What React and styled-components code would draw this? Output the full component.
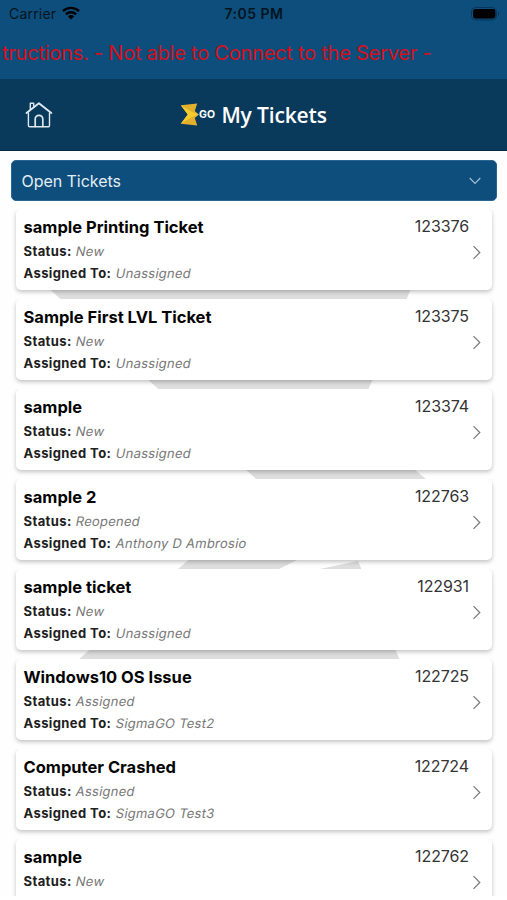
import styled, { createGlobalStyle } from 'styled-components';

const tickets = [
    { id: '123376', title: 'sample Printing Ticket', status: 'New', assignedTo: 'Unassigned' },
    { id: '123375', title: 'Sample First LVL Ticket', status: 'New', assignedTo: 'Unassigned' },
    { id: '123374', title: 'sample', status: 'New', assignedTo: 'Unassigned' },
    { id: '122763', title: 'sample 2', status: 'Reopened', assignedTo: 'Anthony D Ambrosio' },
    { id: '122931', title: 'sample ticket', status: 'New', assignedTo: 'Unassigned' },
    { id: '122725', title: 'Windows10 OS Issue', status: 'Assigned', assignedTo: 'SigmaGO Test2' },
    { id: '122724', title: 'Computer Crashed', status: 'Assigned', assignedTo: 'SigmaGO Test3' },
    { id: '122762', title: 'sample', status: 'New' },
];

//icons
const WifiIcon = () => (
    <svg width='18' height='14' viewBox='0 0 18 14' fill='none' stroke='#000' strokeWidth='2.4'>
        <path d='M1 5.2a11.4 11.4 0 0 1 16 0' />
        <path d='M3.9 8.3a7.2 7.2 0 0 1 10.2 0' />
        <path d='M9 13.6 5.9 10.4a4.4 4.4 0 0 1 6.2 0Z' fill='#000' stroke='none' />
    </svg>
);

const BatteryIcon = () => (
    <svg width='29' height='14' viewBox='0 0 29 14'>
        <rect x='.5' y='.5' width='25' height='12.4' rx='4' fill='none' stroke='#07365a' />
        <rect x='2' y='2' width='22.4' height='9.4' rx='2.4' fill='#000' />
        <path d='M27 4.5c1.4.5 1.4 4 0 4.5Z' fill='#07365a' />
    </svg>
);

const HomeIcon = () => (
    <svg width='28' height='28' viewBox='0 0 28 28' fill='none' stroke='#dfe8ee' strokeWidth='1.4' strokeLinejoin='round' strokeLinecap='round'>
        <path d='M3.4 12v12.4a1.4 1.4 0 0 0 1.4 1.4h18.3a1.4 1.4 0 0 0 1.4-1.4V12' />
        <path d='M1.5 12 13.9 2.3 26.3 12' strokeWidth='1.9' />
        <path d='M5.3 8.2V2.2h3.4v3.2' />
        <path d='M10.2 25.4v-7.3a3.8 3.8 0 0 1 7.6 0v7.3' strokeWidth='1.7' />
    </svg>
);

const SigmaMark = () => (
    <svg width='19' height='23' viewBox='0 0 19 23'>
        <path d='M.8 2.3 17.2.4 14.8 8l4 3.5-4 3.5 2.4 7.4L.8 20.7l7-9.2Z' fill='#e3b02d' />
        <path d='M.8 2.3 11 8.6l7.8 2.9-7.8 2.9L.8 20.7l7-9.2Z' fill='#f4cc2d' />
    </svg>
);

const Watermark = () => (
    <WatermarkSvg width='507' height='745' viewBox='0 151 507 745'>
        <path d='M18 260H423L410 291 372 381 355 420 426 479H256Z' />
        <path d='M229 525H367L279 569H178Z' />
        <path d='M320 569 358 561 423 715H18L178 569Z' />
    </WatermarkSvg>
);

const Chevron = () => (
    <svg width='10' height='15' viewBox='0 0 10 15' fill='none' stroke='#77797b' strokeWidth='1.2'>
        <path d='m1.5 1.2 6.3 6.3-6.3 6.3' />
    </svg>
);

const TicketCard = ({ ticket }) => (
    <Card>
        <div>
            <h2>{ticket.title}</h2>
            <Detail>
                <b>Status:</b> <Value>{ticket.status}</Value>
            </Detail>
            {ticket.assignedTo && (
                <Detail>
                    <b>Assigned To:</b> <Value>{ticket.assignedTo}</Value>
                </Detail>
            )}
        </div>
        <CardAside>
            <span>{ticket.id}</span>
            <Chevron />
        </CardAside>
    </Card>
);

const App = () => {
    return (
        <Screen>
            <GlobalStyle />
            <StatusBar>
                <Carrier>
                    Carrier <WifiIcon />
                </Carrier>
                <Clock>7:05 PM</Clock>
                <Battery>
                    <BatteryIcon />
                </Battery>
            </StatusBar>
            <Marquee>tructions. - Not able to Connect to the Server -</Marquee>
            <Header>
                <HomeIcon />
                <Brand>
                    <SigmaMark />
                    <span>GO</span>
                    <h1>My Tickets</h1>
                </Brand>
            </Header>
            <Content>
                <Watermark />
                <Filter>
                    Open Tickets
                    <svg width='12' height='8' viewBox='0 0 12 8' fill='none' stroke='#a9c1d4' strokeWidth='1.1'>
                        <path d='m.7 1 5.3 5.4L11.3 1' />
                    </svg>
                </Filter>
                <List>
                    {tickets.map((ticket) => (
                        <TicketCard key={ticket.id} ticket={ticket} />
                    ))}
                </List>
            </Content>
        </Screen>
    );
};

export default App;

//Styles
const GlobalStyle = createGlobalStyle`
    * {
        box-sizing: border-box;
    }
    body {
        margin: 0;
        background: #fff;
    }
`;

const Screen = styled.div`
    width: 507px;
    height: 900px;
    overflow: hidden;
    background: #fff;
    font-family: Inter, 'Liberation Sans', sans-serif;
`;

const StatusBar = styled.div`
    display: grid;
    grid-template-columns: 1fr auto 1fr;
    align-items: center;
    height: 28px;
    padding: 0 8px 0 9px;
    background: #0d4e7c;
    color: #051420;
    font-size: 14px;
`;

const Carrier = styled.div`
    display: flex;
    align-items: center;
    gap: 6px;
    margin-top: -1px;
    letter-spacing: 0.2px;

    & svg {
        margin-top: -1px;
    }
`;

const Clock = styled.span`
    margin-top: -1px;
    font-weight: 600;
    letter-spacing: 0.5px;
`;

const Battery = styled.div`
    display: flex;
    justify-content: flex-end;
    margin-right: -1px;
`;

const Marquee = styled.div`
    height: 51px;
    padding-left: 2px;
    background: #0d4e7c;
    color: #d5101d;
    font-size: 20px;
    line-height: 50px;
    letter-spacing: -0.23px;
    white-space: nowrap;
`;

const Header = styled.header`
    display: flex;
    align-items: center;
    height: 72px;
    padding-left: 25px;
    background: #093a5c;
    border-bottom: 1px solid #062840;
`;

const Brand = styled.div`
    display: flex;
    align-items: center;
    margin-left: 127px;
    color: #fff;

    & span {
        font-size: 10.5px;
        font-weight: 700;
        letter-spacing: 0.2px;
    }
    & h1 {
        margin: 1px 0 0 6px;
        font-family: 'Open Sans', 'Noto Sans', sans-serif;
        font-size: 21px;
        font-weight: 600;
        letter-spacing: -0.15px;
    }
`;

const Content = styled.main`
    position: relative;
    height: 745px;
    padding: 9px 10px 0 11px;
    overflow: hidden;
    background: #fefefe;
`;

//sits behind the filter and the cards
const WatermarkSvg = styled.svg`
    position: absolute;
    inset: 0;
    fill: #dedede;
`;

const Filter = styled.div`
    position: relative;
    display: flex;
    justify-content: space-between;
    align-items: center;
    height: 41px;
    padding: 0 15px 0 9.5px;
    border: 1px solid #2a6490;
    border-radius: 5px;
    background: #0d4e7c;
    color: #e4edf4;
    font-size: 16px;
    letter-spacing: -0.05px;
`;

const List = styled.div`
    position: relative;
    display: flex;
    flex-direction: column;
    gap: 9px;
    padding: 8px 5px 0 5px;
`;

const Card = styled.article`
    display: flex;
    flex-shrink: 0;
    justify-content: space-between;
    height: 81px;
    padding: 7px 10px 0 7.5px;
    border-radius: 5px;
    background: #fff;
    box-shadow: 0 2px 4px rgba(0, 0, 0, 0.24);
    clip-path: inset(0 -5px -9px -5px);

    & h2 {
        margin: 0 0 1.5px;
        color: #050505;
        font-size: 16.5px;
        font-weight: 650;
        line-height: 22px;
        letter-spacing: 0;
    }
`;

const Detail = styled.p`
    margin: 0;
    color: #202020;
    font-size: 13px;
    line-height: 22.3px;
    letter-spacing: 0.4px;

    & b {
        font-weight: 650;
    }
`;

//slants the upright letters, so the two-storey "a" stays
const Value = styled.span`
    display: inline-block;
    margin-left: 0.6px;
    color: #777;
    letter-spacing: 0.24px;
    transform: skewX(-11deg);
`;

const CardAside = styled.div`
    display: flex;
    flex-direction: column;
    align-items: flex-end;
    color: #333;
    font-size: 16px;
    line-height: 21px;
    letter-spacing: -0.1px;

    & span {
        margin-right: 13px;
    }
    & svg {
        margin-top: 8px;
    }
`;
